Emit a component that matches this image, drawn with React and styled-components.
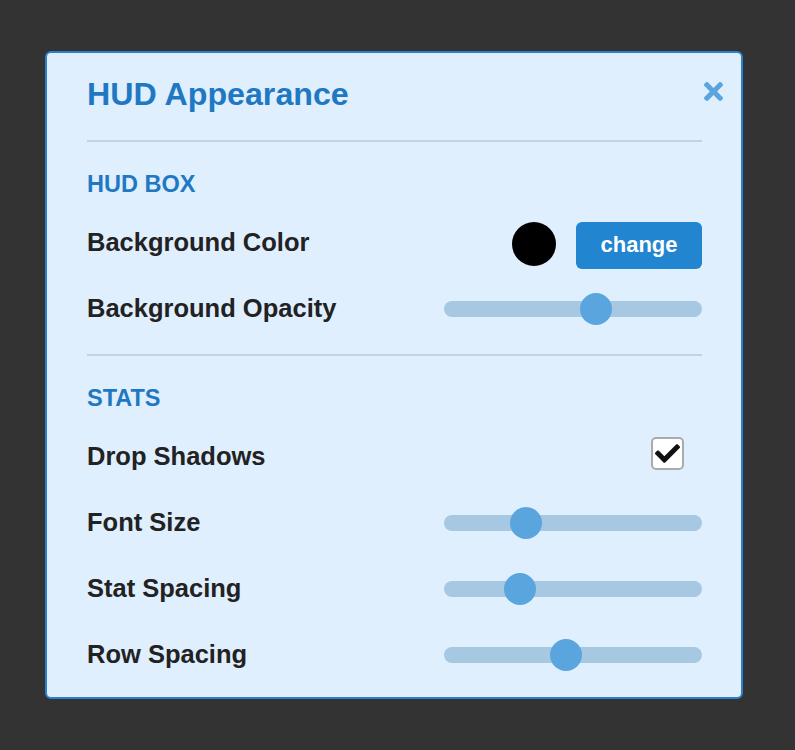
import React, { useState } from "react";
import styled, { createGlobalStyle } from "styled-components";

const GlobalStyle = createGlobalStyle`
  html, body {
    margin: 0;
    padding: 0;
    background: #333333;
    font-family: "Liberation Sans", Helvetica, Arial, sans-serif;
  }
`;

const Page = styled.div`
  min-height: 750px;
  padding: 51px 0 0 45px;
  box-sizing: border-box;
`;

const Panel = styled.div`
  position: relative;
  width: 698px;
  box-sizing: border-box;
  padding: 21px 39px 10px 40px;
  background: #dfeffe;
  border: 2px solid #2a80cd;
  border-radius: 6px;
`;

const Title = styled.h1`
  margin: 0;
  font-size: 32.2px;
  line-height: 40px;
  font-weight: bold;
  color: #1f78c1;
`;

const CloseButton = styled.button`
  position: absolute;
  top: 29px;
  right: 18px;
  width: 19px;
  height: 19px;
  padding: 0;
  border: none;
  background: none;
  cursor: pointer;
  display: flex;
  color: #5aa5de;
`;

const Divider = styled.hr`
  margin: ${(p) => p.$top}px 0 0;
  border: none;
  height: 2px;
  background: #c2d3e3;
`;

const SectionTitle = styled.h2`
  margin: 27px 0 10px;
  font-size: 23.5px;
  line-height: 30px;
  font-weight: bold;
  color: #1f78c1;
`;

const Row = styled.div`
  display: flex;
  align-items: center;
  justify-content: space-between;
  height: 66px;
`;

const Label = styled.span`
  font-size: 25.5px;
  line-height: 30px;
  font-weight: bold;
  color: #222222;
`;

const ColorControls = styled.div`
  display: flex;
  align-items: center;
  gap: 20px;
  margin-top: 6px;
`;

const Swatch = styled.div`
  width: 44px;
  height: 44px;
  border-radius: 50%;
  background: ${(p) => p.$color};
  margin-top: -3px;
`;

const ChangeButton = styled.button`
  width: 126px;
  height: 47px;
  border: none;
  border-radius: 6px;
  background: #2185d0;
  color: #ffffff;
  font-family: inherit;
  font-size: 22px;
  font-weight: bold;
  cursor: pointer;
`;

const SliderTrack = styled.div`
  position: relative;
  width: 258px;
  height: 16px;
  border-radius: 8px;
  background: #a7c8e2;
  margin-top: 1px;
`;

const SliderThumb = styled.div`
  position: absolute;
  top: -8px;
  width: 32px;
  height: 32px;
  border-radius: 50%;
  background: #5aa5de;
`;

const CheckBox = styled.div`
  width: 33px;
  height: 33px;
  box-sizing: border-box;
  margin: 0 18px 5px 0;
  border: 2px solid #ababab;
  border-radius: 5px;
  background: #ffffff;
  display: flex;
  align-items: center;
  justify-content: center;
`;

const Slider = ({ value }) => (
  <SliderTrack>
    <SliderThumb style={{ left: `${value * 226}px` }} />
  </SliderTrack>
);

const CheckIcon = () => (
  <svg width="25" height="19" viewBox="0 65 512 382" fill="#111111">
    <path d="M173.898 439.404l-166.4-166.4c-9.997-9.997-9.997-26.206 0-36.204l36.203-36.204c9.997-9.998 26.207-9.998 36.204 0L192 312.69 432.095 72.596c9.997-9.997 26.207-9.997 36.204 0l36.203 36.204c9.997 9.997 9.997 26.206 0 36.204l-294.4 294.401c-9.998 9.997-26.207 9.997-36.204-.001z" />
  </svg>
);

const CloseIcon = () => (
  <svg width="19" height="19" viewBox="0 80 352 352" fill="currentColor">
    <path d="M242.72 256l100.07-100.07c12.28-12.28 12.28-32.19 0-44.480l-22.24-22.24c-12.28-12.28-32.19-12.28-44.48 0L176 189.28 75.93 89.21c-12.28-12.28-32.19-12.280-44.48 0L9.21 111.45c-12.28 12.28-12.28 32.19 0 44.48L109.28 256 9.21 356.07c-12.28 12.28-12.28 32.19 0 44.48l22.24 22.24c12.28 12.28 32.2 12.28 44.48 0L176 322.72l100.07 100.07c12.28 12.28 32.2 12.28 44.48 0l22.24-22.24c12.28-12.28 12.28-32.19 0-44.48L242.72 256z" />
  </svg>
);

const stats = [
  { name: "Font Size", value: 0.292 },
  { name: "Stat Spacing", value: 0.265 },
  { name: "Row Spacing", value: 0.469 },
];

export default function App() {
  const [shadows] = useState(true);
  return (
    <Page>
      <GlobalStyle />
      <Panel>
        <Title>HUD Appearance</Title>
        <CloseButton aria-label="close">
          <CloseIcon />
        </CloseButton>
        <Divider $top={26} />

        <SectionTitle>HUD BOX</SectionTitle>
        <Row>
          <Label>Background Color</Label>
          <ColorControls>
            <Swatch $color="#000000" />
            <ChangeButton>change</ChangeButton>
          </ColorControls>
        </Row>
        <Row>
          <Label>Background Opacity</Label>
          <Slider value={0.602} />
        </Row>

        <Divider $top={13} />

        <SectionTitle>STATS</SectionTitle>
        <Row>
          <Label>Drop Shadows</Label>
          <CheckBox>{shadows && <CheckIcon />}</CheckBox>
        </Row>
        {stats.map((s) => (
          <Row key={s.name}>
            <Label>{s.name}</Label>
            <Slider value={s.value} />
          </Row>
        ))}
      </Panel>
    </Page>
  );
}
